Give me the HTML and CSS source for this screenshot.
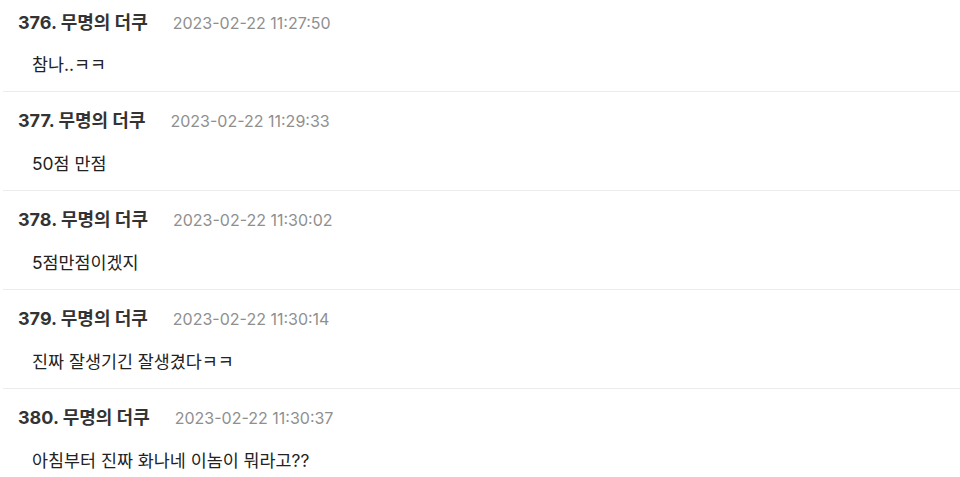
FILE: index.html
```html
<!DOCTYPE html>
<html lang="ko">
<head>
<meta charset="utf-8">
<link rel="stylesheet" href="styles.css">
</head>
<body>
<div class="list">
  <div class="row">
    <div class="head"><span class="name">376. 무명의 더쿠</span><span class="date">2023-02-22 11:27:50</span></div>
    <div class="body">참나..ㅋㅋ</div>
  </div>
  <div class="row">
    <div class="head"><span class="name">377. 무명의 더쿠</span><span class="date">2023-02-22 11:29:33</span></div>
    <div class="body">50점 만점</div>
  </div>
  <div class="row">
    <div class="head"><span class="name">378. 무명의 더쿠</span><span class="date">2023-02-22 11:30:02</span></div>
    <div class="body">5점만점이겠지</div>
  </div>
  <div class="row">
    <div class="head"><span class="name">379. 무명의 더쿠</span><span class="date">2023-02-22 11:30:14</span></div>
    <div class="body">진짜 잘생기긴 잘생겼다ㅋㅋ</div>
  </div>
  <div class="row">
    <div class="head"><span class="name">380. 무명의 더쿠</span><span class="date">2023-02-22 11:30:37</span></div>
    <div class="body">아침부터 진짜 화나네 이놈이 뭐라고??</div>
  </div>
</div>
</body>
</html>
```

FILE: styles.css
```css
html, body {
  margin: 0;
  padding: 0;
  background: #ffffff;
  font-family: "Inter", "Noto Sans CJK KR", sans-serif;
  overflow: hidden;
}
.list {
  padding-left: 3px;
}
.row {
  padding: 17px 0 14px 15px;
  border-bottom: 1px solid #ececec;
}
.row:first-child {
  padding-top: 11px;
}
.head {
  display: flex;
  align-items: baseline;
  gap: 25px;
  height: 24px;
  line-height: 24px;
}
.name {
  font-size: 18px;
  font-weight: bold;
  color: #333333;
}
.date {
  font-size: 16px;
  color: #8f8f8f;
}
.body {
  margin-top: 19px;
  padding-left: 14px;
  font-size: 17.4px;
  line-height: 24px;
  color: #222222;
}
.row:first-child .body {
  margin-top: 18px;
}
```
